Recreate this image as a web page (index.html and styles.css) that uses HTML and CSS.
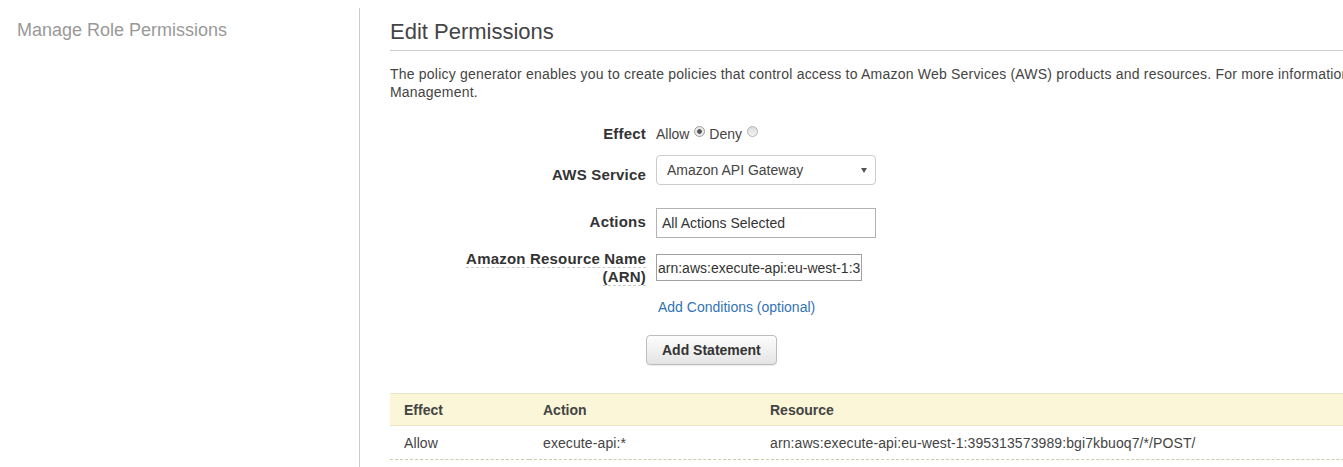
FILE: index.html
```html
<!DOCTYPE html>
<html lang="en">
<head>
<meta charset="utf-8">
<title>Edit Permissions</title>
<link rel="stylesheet" href="styles.css">
</head>
<body>
<div class="page">
  <aside class="sidebar">
    <div class="sidebar-title">Manage Role Permissions</div>
  </aside>
  <main class="main">
    <h1 class="title">Edit Permissions</h1>
    <p class="intro">The policy generator enables you to create policies that control access to Amazon Web Services (AWS) products and resources. For more information about creating policies, see key concepts in Using AWS Identity and Access<br>Management.</p>

    <form class="form">
      <div class="row row-effect">
        <div class="label">Effect</div>
        <div class="control">
          <label class="radio-label">Allow<input type="radio" name="effect" class="radio" checked></label>
          <label class="radio-label deny">Deny<input type="radio" name="effect" class="radio"></label>
        </div>
      </div>

      <div class="row row-service">
        <div class="label label-service">AWS Service</div>
        <div class="control">
          <span class="select-wrap">
            <select class="select">
              <option>Amazon API Gateway</option>
            </select>
          </span>
        </div>
      </div>

      <div class="row row-actions">
        <div class="label label-actions">Actions</div>
        <div class="control">
          <input type="text" class="text-input actions-input" value="All Actions Selected">
        </div>
      </div>

      <div class="row row-arn">
        <div class="label"><span class="abbr">Amazon Resource Name</span> <span class="abbr">(ARN)</span></div>
        <div class="control">
          <input type="text" class="text-input arn-input" value="arn:aws:execute-api:eu-west-1:395313573989:bgi7kbuoq7/*/POST/">
        </div>
      </div>

      <div class="row row-link">
        <div class="label"></div>
        <div class="control">
          <a href="#" class="link">Add Conditions (optional)</a>
        </div>
      </div>

      <div class="row row-button">
        <div class="label"></div>
        <div class="control">
          <button type="button" class="button">Add Statement</button>
        </div>
      </div>
    </form>

    <table class="statements">
      <colgroup>
        <col class="col-effect">
        <col class="col-action">
        <col>
      </colgroup>
      <thead>
        <tr><th>Effect</th><th>Action</th><th>Resource</th></tr>
      </thead>
      <tbody>
        <tr><td>Allow</td><td>execute-api:*</td><td>arn:aws:execute-api:eu-west-1:395313573989:bgi7kbuoq7/*/POST/</td></tr>
      </tbody>
    </table>
  </main>
</div>
</body>
</html>
```

FILE: styles.css
```css
html, body {
  margin: 0;
  padding: 0;
  overflow: hidden;
  background: #fff;
}

body {
  font-family: "Liberation Sans", Arial, sans-serif;
  font-size: 14px;
  line-height: 18px;
  color: #444;
}

.page {
  display: flex;
  padding-top: 8px;
  min-height: 100vh;
  box-sizing: border-box;
}

.sidebar {
  flex: none;
  width: 360px;
  box-sizing: border-box;
  border-right: 1px solid #ccc;
  padding: 11px 0 0 17px;
}

.sidebar-title {
  font-size: 18px;
  line-height: 22px;
  color: #999;
}

.main {
  flex: none;
  width: 1500px;
  padding-left: 30px;
}

.title {
  margin: 0;
  padding: 11px 0 5px;
  font-size: 22px;
  line-height: 26px;
  font-weight: normal;
  color: #444;
  border-bottom: 1px solid #ccc;
}

.intro {
  margin: 14px 0 0;
  color: #444;
  letter-spacing: 0.21px;
}

.form {
  margin: 24px 0 0;
  padding-left: 66px;
}

.row {
  display: flex;
  align-items: flex-start;
}

.label {
  flex: none;
  width: 190px;
  text-align: right;
  font-size: 15px;
  line-height: 18px;
  font-weight: bold;
  letter-spacing: 0.2px;
  color: #333;
}

.control {
  margin-left: 10px;
}

.row-service { margin-top: 12px; }
.label-service { padding-top: 11px; }

.row-actions { margin-top: 23px; }
.label-actions { padding-top: 5px; }

.row-arn { margin-top: 12px; }
.row-arn .control { padding-top: 4px; }

.row-link { margin-top: 12px; }
.row-button { margin-top: 19px; }
.row-button .control { margin-left: 0; }

.abbr {
  border-bottom: 1px dashed #ccc;
}

.radio-label {
  color: #444;
}

.radio {
  -webkit-appearance: none;
  appearance: none;
  display: inline-block;
  width: 11px;
  height: 11px;
  margin: 0 0 0 5px;
  padding: 0;
  box-sizing: border-box;
  border: 1px solid #b4b4b4;
  border-radius: 50%;
  background: linear-gradient(#dcdcdc, #f4f4f4);
  vertical-align: 2px;
}

.radio:checked {
  background: radial-gradient(circle, #555 0, #555 2px, #e6e6e6 2.6px, #f2f2f2 100%);
  border-color: #9a9a9a;
}

.select-wrap {
  position: relative;
  display: inline-block;
}

.select-wrap::after {
  content: "";
  position: absolute;
  right: 9px;
  top: 13px;
  border-left: 3px solid transparent;
  border-right: 3px solid transparent;
  border-top: 5px solid #555;
  pointer-events: none;
}

.select {
  -webkit-appearance: none;
  appearance: none;
  display: block;
  width: 220px;
  height: 30px;
  box-sizing: border-box;
  margin: 0;
  padding: 0 24px 0 10px;
  border: 1px solid #ccc;
  border-radius: 4px;
  background: #fff;
  font-family: inherit;
  font-size: 14px;
  color: #444;
}

.text-input {
  display: block;
  box-sizing: border-box;
  margin: 0;
  border: 1px solid #aaa;
  border-radius: 0;
  background: #fff;
  font-family: inherit;
  font-size: 14px;
  color: #333;
  outline: none;
}

.actions-input {
  width: 220px;
  height: 30px;
  padding: 0 5px;
  border-color: #b3b3b3;
}

.arn-input {
  width: 206px;
  height: 27px;
  padding: 0 1px;
  border-color: #a0a0a0;
}

.link {
  color: #3473b4;
  text-decoration: none;
  margin-left: 2px;
}

.button {
  display: block;
  height: 30px;
  box-sizing: border-box;
  padding: 0 15px;
  margin: 0;
  border: 1px solid #bdbdbd;
  border-radius: 4px;
  background: linear-gradient(#fdfdfd, #e4e4e4);
  box-shadow: 0 1px 1px rgba(0, 0, 0, 0.08);
  font-family: inherit;
  font-size: 14px;
  line-height: 18px;
  font-weight: bold;
  color: #333;
}

.statements {
  margin-top: 28px;
  width: 100%;
  border-collapse: collapse;
  table-layout: fixed;
}

.col-effect { width: 139px; }
.col-action { width: 227px; }

.statements th {
  text-align: left;
  font-weight: bold;
  color: #444;
  background: #faf6d7;
  border-top: 1px solid #e9e5c5;
  border-bottom: 1px solid #e9e5c5;
  padding: 7px 14px 6px;
  white-space: nowrap;
}

.statements td {
  padding: 8px 14px 7px;
  color: #444;
  letter-spacing: 0.1px;
  border-bottom: 1px dashed #cfcba5;
  white-space: nowrap;
}
```
